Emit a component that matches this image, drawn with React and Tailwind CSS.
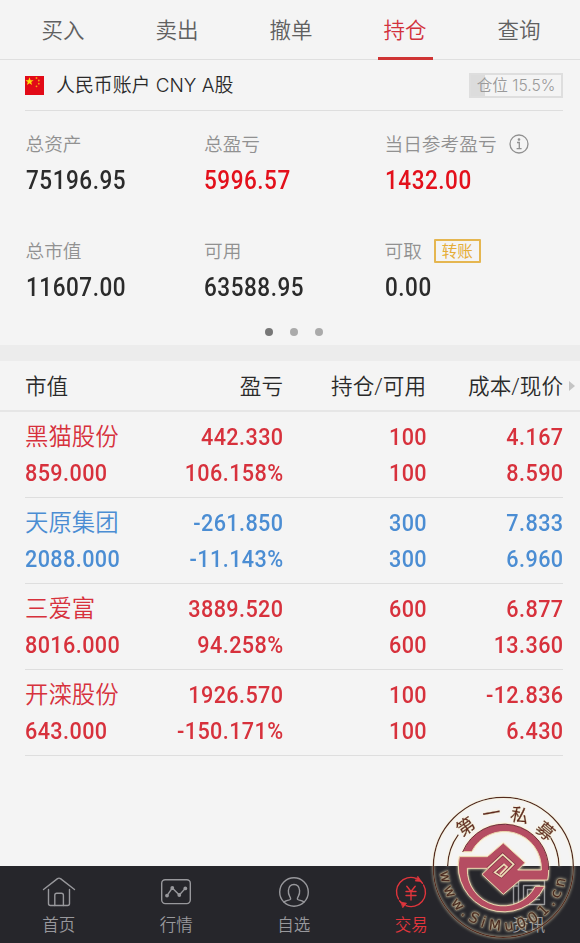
const TABS = ["买入", "卖出", "撤单", "持仓", "查询"];

const SUMMARY = [
  { label: "总资产", value: "75196.95" },
  { label: "总盈亏", value: "5996.57", red: true },
  { label: "当日参考盈亏", value: "1432.00", red: true, info: true },
  { label: "总市值", value: "11607.00" },
  { label: "可用", value: "63588.95" },
  { label: "可取", value: "0.00", transfer: true },
];

const HOLDINGS = [
  { name: "黑猫股份", up: true, cells: [["442.330", "106.158%"], ["100", "100"], ["4.167", "8.590"]], value: "859.000" },
  { name: "天原集团", up: false, cells: [["-261.850", "-11.143%"], ["300", "300"], ["7.833", "6.960"]], value: "2088.000" },
  { name: "三爱富", up: true, cells: [["3889.520", "94.258%"], ["600", "600"], ["6.877", "13.360"]], value: "8016.000" },
  { name: "开滦股份", up: true, cells: [["1926.570", "-150.171%"], ["100", "100"], ["-12.836", "6.430"]], value: "643.000" },
];

const svgProps = {
  viewBox: "0 0 36 36",
  fill: "none",
  stroke: "currentColor",
  strokeWidth: 1.4,
  strokeLinecap: "round",
  strokeLinejoin: "round",
  className: "size-9",
};

function HomeIcon() {
  return (
    <svg {...svgProps}>
      <path d="M2.5 15.5 16.5 4.6q1.5-1 3 0L33.5 15.5" />
      <path d="M7.5 15.5v14q0 2 2 2h17q2 0 2-2v-14" />
      <path d="M13.8 31.5V21.3q0-2 2-2h4.6q2 0 2 2v10.2" />
    </svg>
  );
}

function MarketIcon() {
  return (
    <svg {...svgProps}>
      <rect x="3.7" y="5.8" width="28.6" height="23.8" rx="3.5" />
      <path d="M9 21.6 14.3 14l7 7 6-6.600" />
      <g fill="currentColor" stroke="none">
        <circle cx="9" cy="21.6" r="1.9" />
        <circle cx="14.3" cy="14" r="1.9" />
        <circle cx="21.3" cy="21" r="1.9" />
        <circle cx="27.3" cy="14.4" r="1.9" />
      </g>
    </svg>
  );
}

function WatchIcon() {
  return (
    <svg {...svgProps}>
      <circle cx="18" cy="18" r="14.3" />
      <path d="M8 28c1.500-1.300 4.500-1.600 6.200-2.500.8-.6.3-1.900-.5-3.200-1.100-1.800-1.500-3.500-1.300-5.800.3-3.600 2.400-6 5.600-6s5.300 2.400 5.600 6c.2 2.300-.2 4-1.300 5.800-.8 1.300-1.300 2.600-.5 3.200 1.700.9 4.700 1.200 6.200 2.500" />
    </svg>
  );
}

function TradeIcon() {
  return (
    <svg {...svgProps}>
      <path d="M5.500 25A14.300 14.300 0 0 1 23 4.400M6.500 26.700 8.300 28.800M30.500 11A14.300 14.300 0 0 1 13 31.600M29.500 9.300 27.700 7.200" />
      <path d="M25 2.600 28.300 7.400 22.600 7ZM8.200 28.200 13.500 29.200 10 33.400Z" fill="currentColor" strokeWidth="0.8" />
      <path d="m13.800 12.300 4.200 5.200 4.200-5.200M18 17.500v8.500M13 17.500h10M13 21.500h10" />
    </svg>
  );
}

function NewsIcon() {
  return (
    <svg {...svgProps}>
      <path d="M7.500 12H2.500v16q0 2.500 2.500 2.500h28.500V6.500h-26V28q0 2.500-2.500 2.500" />
      <path d="M12.500 11.500h16M12.500 11.500v14M16.500 15.500h12M16.500 15.500v6h12M12.500 25.500h16" />
    </svg>
  );
}

const NAV = [
  { label: "首页", Icon: HomeIcon },
  { label: "行情", Icon: MarketIcon },
  { label: "自选", Icon: WatchIcon },
  { label: "交易", Icon: TradeIcon, active: true },
  { label: "资讯", Icon: NewsIcon },
];

function Flag() {
  const small = [[11.5, 2], [13.8, 4.5], [13.8, 7.7], [11.5, 10.3]];
  return (
    <svg viewBox="0 0 19 19" className="size-[19px]">
      <rect width="19" height="19" fill="#e20a17" />
      <path d="m4.500 1.300 1.100 2.900h3L6.200 6.100l.9 3-2.600-1.800-2.600 1.800.9-3L.4 4.200h3z" fill="#fce00a" />
      {small.map(([x, y]) => (
        <circle key={y} cx={x} cy={y} r="0.9" fill="#f5a512" />
      ))}
    </svg>
  );
}

function SummaryItem({ item }) {
  return (
    <div>
      <div className="flex h-[26px] items-center text-[18.7px] font-[350] text-[#919191]">
        <span className="relative top-[1.5px]">{item.label}</span>
        {item.info && (
          <svg viewBox="0 0 20 20" className="ml-3 size-5" fill="none" stroke="currentColor" strokeWidth="1.3">
            <circle cx="10" cy="10" r="9" />
            <path d="M8 8.500h2.300v6M7.600 14.700h5" />
            <circle cx="10" cy="5.5" r="0.7" fill="currentColor" />
          </svg>
        )}
        {item.transfer && (
          <span className="ml-3 flex h-6 w-[47px] items-center justify-center rounded-[1px] border-2 border-[#e5b650] pt-[3px] text-[15.5px] leading-none font-normal text-[#e5ad38]">
            转账
          </span>
        )}
      </div>
      <p
        className={`mt-[11px] h-[25px] origin-left scale-x-90 text-[25px] leading-[26px] font-medium tracking-[0.6px] ${item.red ? "text-[#e3101b]" : "text-[#2b2b2b]"}`}
      >
        {item.value}
      </p>
    </div>
  );
}

function HoldingRow({ row }) {
  return (
    <div
      className={`mr-[17px] ml-[25px] grid h-[86px] grid-cols-[121px_137.5px_143px_136.5px] content-start border-b border-[#dedede] pt-[7px] text-right text-[24px] leading-[36.4px] font-medium tracking-[0.45px] ${row.up ? "text-[#d7313c]" : "text-[#4b8dd3]"}`}
    >
      <div className="text-left">
        <p className="text-[23.4px] font-[350] tracking-normal">{row.name}</p>
        <p className="origin-left scale-x-90">{row.value}</p>
      </div>
      {row.cells.map(([top, bottom], i) => (
        <div key={i} className="origin-right scale-x-90 whitespace-nowrap">
          <p>{top}</p>
          <p>{bottom}</p>
        </div>
      ))}
    </div>
  );
}

const SEAL_CHARS = [
  { char: "第", x: 137, y: 124, turn: -35 },
  { char: "一", x: 214, y: 84, turn: -10 },
  { char: "私", x: 299, y: 90, turn: 12 },
  { char: "募", x: 376, y: 138, turn: 40 },
];

// Round seal: two rings, text around them and the coin emblem in the middle.
function Seal() {
  return (
    <svg viewBox="0 0 480 474" className="absolute right-0 bottom-0 h-[158px] w-40">
      <defs>
        <path id="arcBottom" d="M60 247a190 190 0 0 0 380 0" />
        <filter id="glow" x="-20%" y="-20%" width="140%" height="140%">
          <feDropShadow dx="0" dy="0" stdDeviation="5" floodColor="#fff0c8" floodOpacity="0.9" />
        </filter>
      </defs>
      <g filter="url(#glow)">
        <circle cx="250" cy="247" r="210" fill="none" stroke="#55291f" strokeWidth="4" />
        <path d="M83 243a167 167 0 0 1 32-94M392 158a167 167 0 0 1 25 85" fill="none" stroke="#55291f" strokeWidth="4" />
      </g>
      <g filter="url(#glow)" fill="#642a1d">
        {SEAL_CHARS.map(({ char, x, y, turn }) => (
          <text
            key={char}
            transform={`translate(${x} ${y}) rotate(${turn})`}
            y="20"
            fontSize="54"
            textAnchor="middle"
            stroke="#642a1d"
            strokeWidth="1"
          >
            {char}
          </text>
        ))}
        <text fontSize="43" fontFamily="DejaVu Sans" letterSpacing="14" fill="#4a2a20" stroke="#8d7b60" strokeWidth="3" paintOrder="stroke">
          <textPath href="#arcBottom" startOffset="14">www.SiMu001.cn</textPath>
        </text>
      </g>
      <g filter="url(#glow)" stroke="#ead6ae" strokeWidth="3">
        <path
          d="M128 200A134 134 0 0 1 386 255Q386 270 383 285H300L250 328 186 268 205 250H142A108 108 0 0 0 346 304H374A136.500 136.500 0 0 1 118 215H202L250 174 315 233 293 255H364A110.500 110.500 0 0 0 155 200Z"
          fill="#b54d62"
        />
        <path d="M203 250 248 208 281 238 244 275 224 262 252 238" fill="none" stroke="#7d3142" strokeWidth="9" />
        <path d="M203 250 248 208 281 238 244 275 224 262 252 238 261 246 240 268" fill="none" stroke="#eedcb6" strokeWidth="5" />
        <path d="M128 201A134 134 0 0 1 386 255" fill="none" stroke="#6f2c3b" strokeWidth="3" />
      </g>
    </svg>
  );
}

export default function App() {
  return (
    <div className="relative flex h-[943px] w-[580px] flex-col overflow-hidden bg-[#f4f4f4] font-[Roboto,'Noto_Sans_CJK_SC',sans-serif]">
      <nav className="flex h-[60px] shrink-0 border-b border-[#dfdfdf] pr-1 pl-1.5">
        {TABS.map((tab) => (
          <div
            key={tab}
            className={`flex flex-1 justify-center text-[21.5px] leading-[62px] font-[350] ${tab === "持仓" ? "text-[#d2323c]" : "text-[#606060]"}`}
          >
            <span className={`h-[60px] w-[55px] text-center ${tab === "持仓" ? "border-b-3 border-[#cf3434]" : ""}`}>{tab}</span>
          </div>
        ))}
      </nav>

      <div className="mr-[17px] ml-[25px] flex h-[51px] shrink-0 items-center border-b border-[#dedede] font-[Inter,'Noto_Sans_CJK_SC',sans-serif]">
        <Flag />
        <span className="relative top-[1.5px] ml-3 text-[18.9px] font-[350] text-[#2a2a2a]">人民币账户 CNY A股</span>
        <span className="ml-auto flex h-[25px] w-[94px] items-center justify-center border-2 border-[#dedede] bg-linear-to-r from-[#dcdcdc] from-[15.5%] to-transparent to-[15.5%] pt-0.5 text-[15.6px] leading-none font-[350] whitespace-nowrap text-[#999]">
          仓位 15.5%
        </span>
      </div>

      <div className="grid h-[201px] shrink-0 grid-cols-[178.5px_180.5px_1fr] content-start gap-y-[45px] pt-5 pl-[25.5px]">
        {SUMMARY.map((item) => (
          <SummaryItem key={item.label} item={item} />
        ))}
      </div>
      <div className="flex h-[33px] shrink-0 justify-center gap-[17px] pt-4 pl-[7px]">
        <i className="size-2 rounded-full bg-[#777]" />
        <i className="size-2 rounded-full bg-[#aaa]" />
        <i className="size-2 rounded-full bg-[#aaa]" />
      </div>
      <div className="h-4 shrink-0 bg-[#ececec]" />

      <div className="flex h-[51px] shrink-0 border-b-2 border-[#e6e6e6] pl-[25px]">
        <div className="grid w-[538px] grid-cols-[121px_137px_143px_137px] text-right text-[21.6px] leading-[52px] font-[350] whitespace-nowrap text-[#2a2a2a]">
          <span className="text-left">市值</span>
          <span>盈亏</span>
          <span>持仓/可用</span>
          <span>成本/现价</span>
        </div>
        <i className="mt-5 ml-1.5 h-0 w-0 border-y-[5px] border-l-[6px] border-y-transparent border-l-[#c4c4c4]" />
      </div>
      {HOLDINGS.map((row) => (
        <HoldingRow key={row.name} row={row} />
      ))}

      <footer className="mt-auto flex h-[77px] shrink-0 bg-[#26262b]">
        {NAV.map(({ label, Icon, active }) => (
          <div
            key={label}
            className={`flex w-[117.5px] shrink-0 flex-col items-center pt-2 text-[16.5px] leading-6 font-[350] ${active ? "text-[#e0353c]" : "text-[#98989c]"}`}
          >
            <Icon />
            <span className="mt-1">{label}</span>
          </div>
        ))}
      </footer>
      <Seal />
    </div>
  );
}
